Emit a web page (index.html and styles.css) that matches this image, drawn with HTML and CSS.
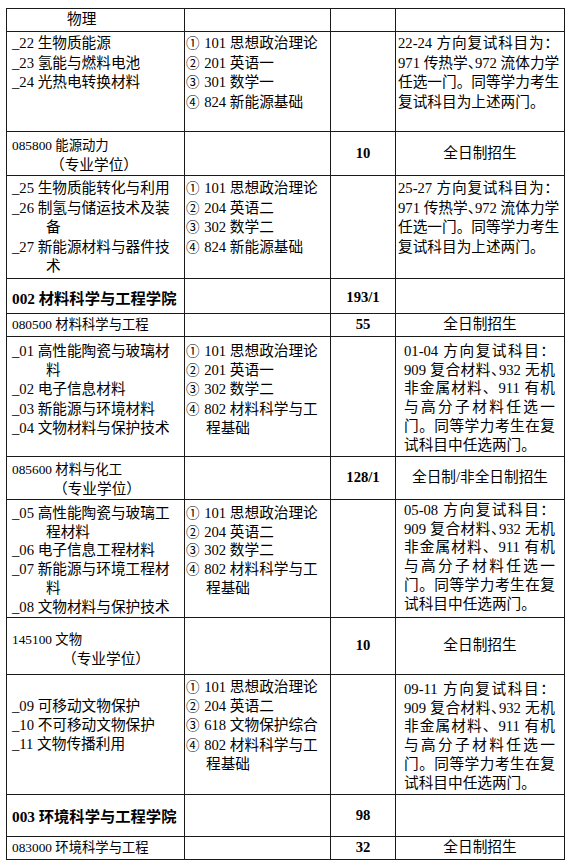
FILE: index.html
```html
<!DOCTYPE html>
<html lang="zh-CN">
<head>
<meta charset="utf-8">
<title>招生目录</title>
<link rel="stylesheet" href="styles.css">
</head>
<body>
<table class="sheet">
<colgroup><col class="c1"><col class="c2"><col class="c3"><col class="c4"></colgroup>
<tbody>
<tr class="r1">
  <td class="a mid"><div class="wuli">物理</div></td><td></td><td></td><td></td>
</tr>
<tr class="r2">
  <td class="a pt2">
    <div>_22 生物质能源</div>
    <div>_23 氢能与燃料电池</div>
    <div>_24 光热电转换材料</div>
  </td>
  <td class="b pt2">
    <div><span class="cn">①</span> 101 思想政治理论</div>
    <div><span class="cn">②</span> 201 英语一</div>
    <div><span class="cn">③</span> 301 数学一</div>
    <div><span class="cn">④</span> 824 新能源基础</div>
  </td>
  <td></td>
  <td class="d pt2">
    <div class="j">22-24 方向复试科目为：</div>
    <div class="j">971 传热学<span class="hp">、</span>972 流体力学</div>
    <div class="j">任选一门。同等学力考生</div>
    <div>复试科目为上述两门。</div>
  </td>
</tr>
<tr class="r3">
  <td class="a pt4">
    <div class="code">085800 能源动力</div>
    <div class="par3">（专业学位）</div>
  </td>
  <td></td>
  <td class="n">10</td>
  <td class="s">全日制招生</td>
</tr>
<tr class="r4">
  <td class="a pt3">
    <div>_25 生物质能转化与利用</div>
    <div>_26 制氢与储运技术及装</div>
    <div class="ind1">备</div>
    <div>_27 新能源材料与器件技</div>
    <div class="ind1">术</div>
  </td>
  <td class="b pt3">
    <div><span class="cn">①</span> 101 思想政治理论</div>
    <div><span class="cn">②</span> 204 英语二</div>
    <div><span class="cn">③</span> 302 数学二</div>
    <div><span class="cn">④</span> 824 新能源基础</div>
  </td>
  <td></td>
  <td class="d pt3">
    <div class="j">25-27 方向复试科目为：</div>
    <div class="j">971 传热学<span class="hp">、</span>972 流体力学</div>
    <div class="j">任选一门。同等学力考生</div>
    <div>复试科目为上述两门。</div>
  </td>
</tr>
<tr class="r5">
  <td class="a pt10"><div class="hd">002 材料科学与工程学院</div></td>
  <td></td>
  <td class="n top pt9">193/1</td>
  <td></td>
</tr>
<tr class="r6">
  <td class="a mid"><div class="code">080500 材料科学与工程</div></td>
  <td></td>
  <td class="n">55</td>
  <td class="s">全日制招生</td>
</tr>
<tr class="r7">
  <td class="a pt5 tight">
    <div>_01 高性能陶瓷与玻璃材</div>
    <div class="ind1">料</div>
    <div>_02 电子信息材料</div>
    <div>_03 新能源与环境材料</div>
    <div>_04 文物材料与保护技术</div>
  </td>
  <td class="b pt5 tight">
    <div><span class="cn">①</span> 101 思想政治理论</div>
    <div><span class="cn">②</span> 201 英语一</div>
    <div><span class="cn">③</span> 302 数学二</div>
    <div><span class="cn">④</span> 802 材料科学与工</div>
    <div class="ind2">程基础</div>
  </td>
  <td></td>
  <td class="d2 pt5">
    <div class="j">01-04 方向复试科目：</div>
    <div class="j">909 复合材料<span class="hp">、</span>932 无机</div>
    <div class="j">非金属材料、911 有机</div>
    <div class="j">与高分子材料任选一</div>
    <div class="j">门。同等学力考生在复</div>
    <div>试科目中任选两门。</div>
  </td>
</tr>
<tr class="r8">
  <td class="a pt3">
    <div class="code">085600 材料与化工</div>
    <div class="par8">（专业学位）</div>
  </td>
  <td></td>
  <td class="n">128/1</td>
  <td class="s">全日制/非全日制招生</td>
</tr>
<tr class="r9">
  <td class="a pt4 tight2">
    <div>_05 高性能陶瓷与玻璃工</div>
    <div class="ind1">程材料</div>
    <div>_06 电子信息工程材料</div>
    <div>_07 新能源与环境工程材</div>
    <div class="ind1">料</div>
    <div>_08 文物材料与保护技术</div>
  </td>
  <td class="b pt4 tight2">
    <div><span class="cn">①</span> 101 思想政治理论</div>
    <div><span class="cn">②</span> 204 英语二</div>
    <div><span class="cn">③</span> 302 数学二</div>
    <div><span class="cn">④</span> 802 材料科学与工</div>
    <div class="ind2">程基础</div>
  </td>
  <td></td>
  <td class="d2 pt1">
    <div class="j">05-08 方向复试科目：</div>
    <div class="j">909 复合材料<span class="hp">、</span>932 无机</div>
    <div class="j">非金属材料、911 有机</div>
    <div class="j">与高分子材料任选一</div>
    <div class="j">门。同等学力考生在复</div>
    <div>试科目中任选两门。</div>
  </td>
</tr>
<tr class="r10">
  <td class="a pt12">
    <div class="code">145100 文物</div>
    <div class="par10">（专业学位）</div>
  </td>
  <td></td>
  <td class="n">10</td>
  <td class="s">全日制招生</td>
</tr>
<tr class="r11">
  <td class="a pt22 tight">
    <div>_09 可移动文物保护</div>
    <div>_10 不可移动文物保护</div>
    <div>_11 文物传播利用</div>
  </td>
  <td class="b pt3 tight">
    <div><span class="cn">①</span> 101 思想政治理论</div>
    <div><span class="cn">②</span> 204 英语二</div>
    <div><span class="cn">③</span> 618 文物保护综合</div>
    <div><span class="cn">④</span> 802 材料科学与工</div>
    <div class="ind2">程基础</div>
  </td>
  <td></td>
  <td class="d2 pt5">
    <div class="j">09-11 方向复试科目：</div>
    <div class="j">909 复合材料<span class="hp">、</span>932 无机</div>
    <div class="j">非金属材料、911 有机</div>
    <div class="j">与高分子材料任选一</div>
    <div class="j">门。同等学力考生在复</div>
    <div>试科目中任选两门。</div>
  </td>
</tr>
<tr class="r12">
  <td class="a pt12"><div class="hd">003 环境科学与工程学院</div></td>
  <td></td>
  <td class="n top pt11">98</td>
  <td></td>
</tr>
<tr class="r13">
  <td class="a mid"><div class="code">083000 环境科学与工程</div></td>
  <td></td>
  <td class="n">32</td>
  <td class="s">全日制招生</td>
</tr>
</tbody>
</table>
</body>
</html>
```

FILE: styles.css
```css
html, body {
  margin: 0;
  padding: 0;
  background: #ffffff;
}

body {
  font-family: "Liberation Serif", "Noto Sans CJK SC", serif;
  font-size: 14.67px;
  color: #000000;
}

.sheet {
  margin: 8px 0 0 6px;
  border-collapse: collapse;
  table-layout: fixed;
  width: 558px;
}

.c1 { width: 178px; }
.c2 { width: 146px; }
.c3 { width: 65px; }
.c4 { width: 169px; }

.sheet td {
  border: 1px solid #1a1a1a;
  padding: 0;
  vertical-align: top;
  line-height: 19.5px;
  white-space: nowrap;
  overflow: hidden;
}

/* row heights */
.r1 { height: 23px; }
.r2 { height: 100px; }
.r3 { height: 43px; }
.r4 { height: 103px; }
.r5 { height: 35px; }
.r6 { height: 23px; }
.r7 { height: 120px; }
.r8 { height: 42px; }
.r9 { height: 118px; }
.r10 { height: 57px; }
.r11 { height: 120px; }
.r12 { height: 42px; }
.r13 { height: 23px; }

/* column cell types */
.sheet td.a { padding-left: 5px; }
.sheet td.b { padding-left: 1px; }
.sheet td.d { padding-left: 2px; padding-right: 5px; }
.sheet td.d2 { padding-left: 8px; padding-right: 9px; line-height: 18.7px; }

.sheet td.n {
  text-align: center;
  font-weight: 700;
  vertical-align: middle;
}
.sheet td.s {
  text-align: center;
  vertical-align: middle;
}
.sheet td.mid { vertical-align: middle; }
.sheet td.top { vertical-align: top; }

.sheet td.tight { line-height: 19.2px; }
.sheet td.tight2 { line-height: 18.7px; }

/* top paddings */
.sheet td.pt1 { padding-top: 1px; }
.sheet td.pt2 { padding-top: 2px; }
.sheet td.pt3 { padding-top: 3px; }
.sheet td.pt4 { padding-top: 4px; }
.sheet td.pt5 { padding-top: 5px; }
.sheet td.pt9 { padding-top: 9px; }
.sheet td.pt10 { padding-top: 10px; }
.sheet td.pt11 { padding-top: 11px; }
.sheet td.pt12 { padding-top: 12px; }
.sheet td.pt22 { padding-top: 22px; }

/* text pieces */
.j {
  text-align: justify;
  text-align-last: justify;
}
.hp { letter-spacing: -0.5em; }

.cn {
  font-family: "Noto Sans CJK SC", sans-serif;
  font-size: 13.5px;
  line-height: 0;
  margin-right: 1px;
}

.code { font-size: 13.33px; }
.hd { font-weight: 700; font-size: 15.3px; }

.ind1 { padding-left: 34px; }
.ind2 { padding-left: 20px; }

.wuli { padding-left: 55px; }
.par3 { padding-left: 38px; }
.par8 { padding-left: 41px; }
.par10 { padding-left: 50px; }
```
